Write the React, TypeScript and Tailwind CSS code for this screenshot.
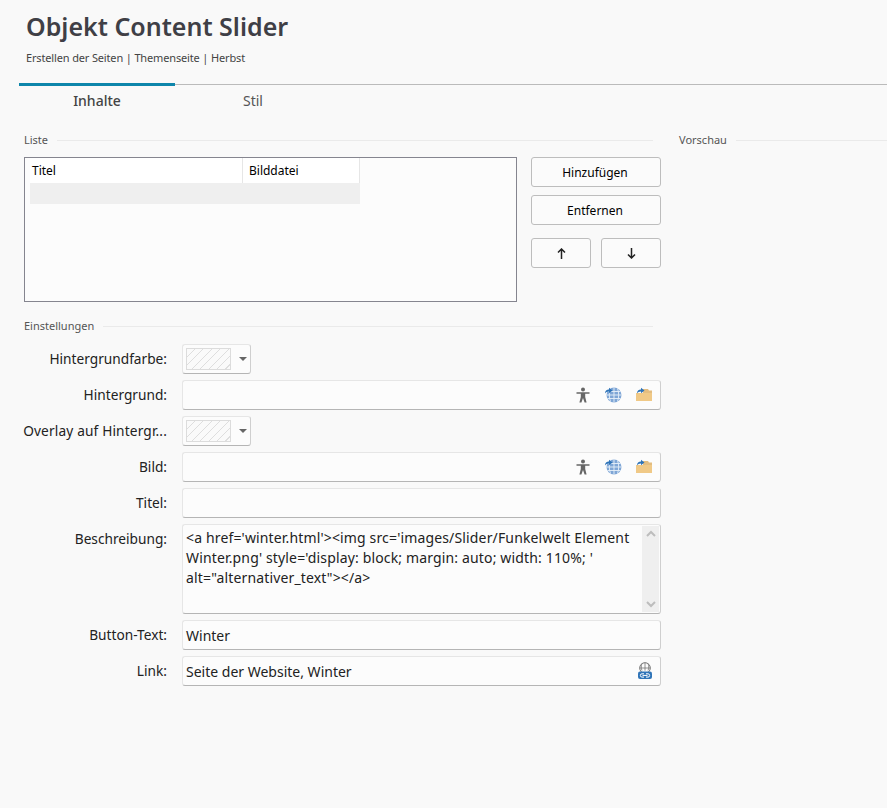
import React from 'react';

const FONT = "font-['Noto_Sans','Open_Sans',sans-serif]";

// Legend with a hairline running to the right
const Legend: React.FC<{ label: string; className?: string }> = ({ label, className = '' }) => (
  <div className={`flex items-center gap-[9px] h-[14px] ${className}`}>
    <span className="text-[11px] leading-[14px] text-[#555]">{label}</span>
    <div className="flex-1 h-px bg-[#eaeaea]" />
  </div>
);

const Button: React.FC<{ children: React.ReactNode; className?: string }> = ({ children, className = '' }) => (
  <button className={`h-[30px] flex items-center justify-center bg-[#fbfbfb] border border-[#bdbdbd] rounded-[3px] text-[12px] text-black ${className}`}>
    {children}
  </button>
);

const AccessIcon = () => (
  <svg width="16" height="16" viewBox="0 0 16 16" fill="#666">
    <circle cx="8" cy="2.600" r="2" />
    <path d="M1.500 5.200h13v1.600H10.200V10l1.400 5.600H9.600L8 11l-1.600 4.600H4.400L5.800 10V6.800H1.500z" />
  </svg>
);

const GlobeIcon = () => (
  <svg width="18" height="16" viewBox="0 0 18 16" fill="none">
    <circle cx="10" cy="8" r="7.500" fill="#7fa6d6" />
    <path d="M2.500 8h15M3.500 4.500h13M3.500 11.500h13M10 .500v15M6.500 1.500c-1.600 3.800-1.600 9.200 0 13M13.500 1.500c1.600 3.800 1.600 9.200 0 13" stroke="#e8f0f9" strokeWidth="0.900" />
    <path d="M1 6.500c0-2.700 1.500-4 4-4V.800L8.500 3.500 5 6.200V4.500C3 4.500 1.800 5.200 1 6.500z" fill="#2f74b8" />
  </svg>
);

const FolderIcon = () => (
  <svg width="18" height="16" viewBox="0 0 18 16">
    <path d="M8 2h5l1 1.500h3V14H8z" fill="#e3bd80" />
    <path d="M1 6h16v8H1z" fill="#f0c987" />
    <path d="M2 6.500c0-2.700 1.500-4 4-4V.800L9.500 3.500 6 6.200V4.500C4 4.500 2.800 5.200 2 6.500z" fill="#2f74b8" />
  </svg>
);

const LinkIcon = () => (
  <svg width="16" height="18" viewBox="0 0 16 18" fill="none">
    <circle cx="8" cy="6" r="5.300" stroke="#777" strokeWidth="1" />
    <path d="M2.700 6h10.600M8 .700v8M5 1.500c-1 2-1 5 0 7M11 1.500c1 2 1 5 0 7" stroke="#777" strokeWidth="0.800" />
    <rect x="1" y="9.500" width="14" height="7.500" rx="2" fill="#2f74b8" />
    <path d="M7 11.800H5a1.500 1.500 0 0 0 0 3.300h2M9 11.800h2a1.500 1.500 0 0 1 0 3.300H9M5.500 13.400h5" stroke="#fff" strokeWidth="1" />
  </svg>
);

const ArrowUp = () => (
  <svg width="9" height="11" viewBox="0 0 9 11" fill="none" stroke="#222" strokeWidth="1.500"><path d="M4.500 11V1M1 4.500l3.500-3.500L8 4.500" /></svg>
);

const ArrowDown = () => (
  <svg width="9" height="11" viewBox="0 0 9 11" fill="none" stroke="#222" strokeWidth="1.500"><path d="M4.500 0v10M1 6.500L4.500 10 8 6.500" /></svg>
);

const Field: React.FC<{ label: string; labelClassName?: string; children: React.ReactNode }> = ({ label, labelClassName = '', children }) => (
  <div className="flex items-start gap-[15px]">
    <div className={`w-[143px] h-[30px] flex items-center justify-end text-[13.7px] text-[#222] whitespace-nowrap ${labelClassName}`}>
      {label}
    </div>
    {children}
  </div>
);

const Input: React.FC<{ value?: string; children?: React.ReactNode }> = ({ value, children }) => (
  <div className="w-[479px] h-[30px] flex items-center justify-between pl-[3px] pr-[7px] bg-[#fcfcfc] border border-[#e6e6e6] border-b-[#b5b5b5] border-r-[#cfcfcf] rounded-[3px] text-[14px] text-[#222]">
    <span>{value}</span>
    {children && <div className="flex items-center gap-[13px]">{children}</div>}
  </div>
);

const ColorPicker = () => (
  <div className="w-[69px] h-[30px] flex items-center gap-[8px] pl-[3px] bg-[#fcfcfc] border border-[#e6e6e6] border-b-[#b5b5b5] border-r-[#cfcfcf] rounded-[3px]">
    <div className="w-[45px] h-[22px] border border-[#dcdcdc] bg-[repeating-linear-gradient(135deg,#fafafa_0,#fafafa_5px,#dedede_5px,#dedede_6px)]" />
    <div className="w-0 h-0 border-x-[4px] border-x-transparent border-t-[4px] border-t-[#666]" />
  </div>
);

const FileIcons = () => (
  <>
    <AccessIcon />
    <GlobeIcon />
    <FolderIcon />
  </>
);

export default function App() {
  return (
    <div className={`${FONT} w-[887px] h-[808px] overflow-hidden bg-[#f9f9f9]`}>
      {/* Header */}
      <div className="h-[84px] pl-[26px] pt-[9px]">
        <h1 className="text-[25px] leading-[34px] font-semibold text-[#3f3f46]">Objekt Content Slider</h1>
        <p className="mt-[7px] text-[11px] leading-[16px] tracking-[-0.15px] text-[#444]">Erstellen der Seiten | Themenseite | Herbst</p>
      </div>

      {/* Tabs */}
      <div className="pl-[19px]">
        <div className="flex items-start h-[2px]">
          <div className="w-[156px] h-[3px] -mt-px bg-[#0e86ab]" />
          <div className="flex-1 h-px bg-[#bbbbbb]" />
        </div>
        <div className="flex h-[38px]">
          <div className="w-[156px] pt-[5px] text-center text-[14px] leading-[20px] font-medium text-[#444]">Inhalte</div>
          <div className="w-[156px] pt-[5px] text-center text-[14px] leading-[20px] text-[#555]">Stil</div>
        </div>
      </div>

      {/* Main */}
      <div className="flex pl-[24px] pt-[9px]">
        <div className="w-[637px] shrink-0">
          <Legend label="Liste" className="mr-[8px]" />
          <div className="flex gap-[14px] mt-[10px]">
            <div className="w-[493px] h-[145px] border border-[#85858f] bg-[#fcfcfc]">
              <div className="pl-[5px]">
                <div className="flex w-[330px] h-[25px] bg-white">
                  <div className="w-[213px] pl-[2px] flex items-center border-r border-[#e6e6e6] text-[12px] text-black">Titel</div>
                  <div className="w-[117px] pl-[6px] flex items-center border-r border-[#e6e6e6] text-[12px] text-black">Bilddatei</div>
                </div>
                <div className="w-[330px] h-[21px] bg-[#efefef]" />
              </div>
            </div>
            <div className="w-[130px] flex flex-col">
              <Button className="pt-px pr-[2px]">Hinzufügen</Button>
              <Button className="mt-[8px] pt-px pr-[2px]">Entfernen</Button>
              <div className="flex justify-between mt-[13px]">
                <Button className="w-[60px]"><ArrowUp /></Button>
                <Button className="w-[60px]"><ArrowDown /></Button>
              </div>
            </div>
          </div>

          <Legend label="Einstellungen" className="mt-[17px] mr-[8px]" />
          <div className="flex flex-col gap-[6px] mt-[11px]">
            <Field label="Hintergrundfarbe:"><ColorPicker /></Field>
            <Field label="Hintergrund:"><Input><FileIcons /></Input></Field>
            <Field label="Overlay auf Hintergr..." labelClassName="tracking-[0.15px]"><ColorPicker /></Field>
            <Field label="Bild:"><Input><FileIcons /></Input></Field>
            <Field label="Titel:"><Input /></Field>
            <Field label="Beschreibung:">
              <div className="w-[479px] h-[90px] flex bg-[#fcfcfc] border border-[#e6e6e6] border-b-[#b5b5b5] border-r-[#cfcfcf] rounded-[3px]">
                <div className="flex-1 pl-[3px] pt-[3px] text-[14px] leading-[20px] tracking-[0.15px] text-[#222]">
                  &lt;a href='winter.html'&gt;&lt;img src='images/Slider/Funkelwelt Element Winter.png' style='display: block; margin: auto; width: 110%; ' alt="alternativer_text"&gt;&lt;/a&gt;
                </div>
                <div className="w-[17px] my-px mr-px flex flex-col items-center justify-between py-[4px] bg-[#efefef] text-[#bdbdbd]">
                  <svg width="10" height="7" viewBox="0 0 10 7" fill="none" stroke="currentColor" strokeWidth="2"><path d="M1 6l4-4 4 4" /></svg>
                  <svg width="10" height="7" viewBox="0 0 10 7" fill="none" stroke="currentColor" strokeWidth="2"><path d="M1 1l4 4 4-4" /></svg>
                </div>
              </div>
            </Field>
            <Field label="Button-Text:"><Input value="Winter" /></Field>
            <Field label="Link:"><Input value="Seite der Website, Winter"><LinkIcon /></Input></Field>
          </div>
        </div>
        <div className="flex-1 pl-[18px]">
          <Legend label="Vorschau" />
        </div>
      </div>
    </div>
  );
}
